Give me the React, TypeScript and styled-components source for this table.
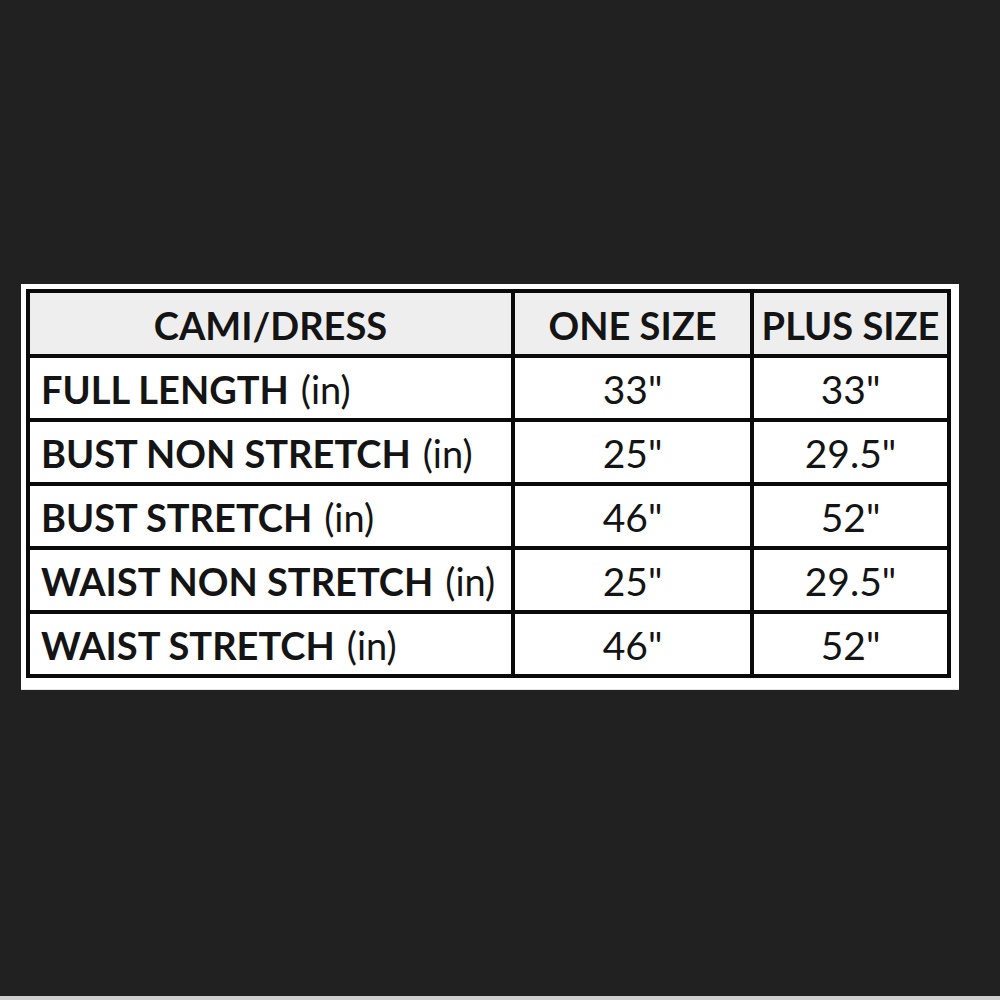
import React from "react";
import styled, { createGlobalStyle } from "styled-components";

const Global = createGlobalStyle`
  html, body { margin: 0; padding: 0; background: #212121; }
  body { font-family: "Lato", "Open Sans", sans-serif; }
`;

const Page = styled.div`
  width: 1000px;
  height: 1000px;
  background: #212121;
  display: flex;
  flex-direction: column;
  box-sizing: border-box;
  padding-top: 284px;
  position: relative;
`;

const Panel = styled.div`
  margin-left: 21px;
  width: 938px;
  height: 406px;
  background: #ffffff;
  box-sizing: border-box;
  padding: 5px 8px 0 5px;
  border-bottom: 1px solid #e4e4e4;
`;

const Table = styled.div`
  display: grid;
  grid-template-columns: 481px 235px 193px;
  grid-template-rows: 61px repeat(5, 60px);
  gap: 4px;
  background: #0a0a0a;
  border: 4px solid #0a0a0a;
`;

const Cell = styled.div<{ $head?: boolean; $left?: boolean }>`
  background: ${(p) => (p.$head ? "#eeeeee" : "#ffffff")};
  display: flex;
  align-items: center;
  justify-content: ${(p) => (p.$left ? "flex-start" : "center")};
  padding: ${(p) => (p.$left ? "2px 0 0 11px" : "2px 0 0 0")};
  font-size: ${(p) => (p.$head || p.$left ? "38px" : "39px")};
  font-weight: ${(p) => (p.$head ? 700 : 400)};
  color: #141414;
  white-space: nowrap;
  overflow: hidden;
  box-sizing: border-box;
`;

const Label = styled.span`
  font-weight: 700;
`;

const Unit = styled.span`
  font-weight: 400;
  margin-left: 12px;
`;

const BottomStrip = styled.div`
  position: absolute;
  left: 0;
  right: 0;
  bottom: 0;
  height: 4px;
  background: #cfcfcf;
`;

const rows = [
  ["FULL LENGTH", '33"', '33"'],
  ["BUST NON STRETCH", '25"', '29.5"'],
  ["BUST STRETCH", '46"', '52"'],
  ["WAIST NON STRETCH", '25"', '29.5"'],
  ["WAIST STRETCH", '46"', '52"'],
];

export default function App() {
  return (
    <>
      <Global />
      <Page>
        <Panel>
          <Table>
            <Cell $head>CAMI/DRESS</Cell>
            <Cell $head>ONE SIZE</Cell>
            <Cell $head>PLUS SIZE</Cell>
            {rows.map(([label, a, b]) => (
              <React.Fragment key={label}>
                <Cell $left>
                  <Label>{label}</Label>
                  <Unit>(in)</Unit>
                </Cell>
                <Cell>{a}</Cell>
                <Cell>{b}</Cell>
              </React.Fragment>
            ))}
          </Table>
        </Panel>
        <BottomStrip />
      </Page>
    </>
  );
}
